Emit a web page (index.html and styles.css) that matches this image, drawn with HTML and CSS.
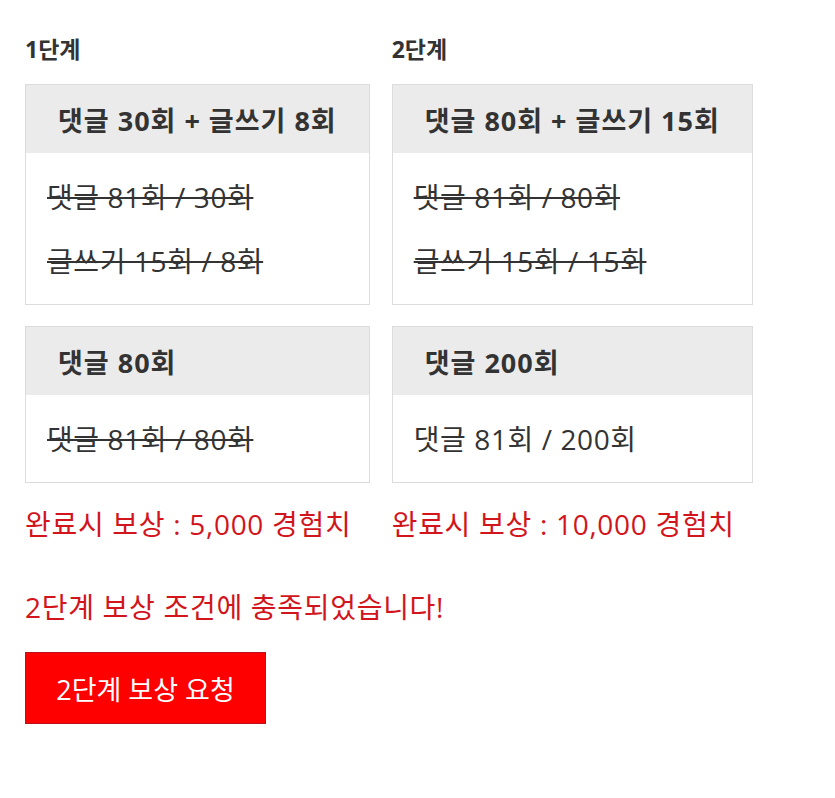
FILE: index.html
```html
<!DOCTYPE html>
<html lang="ko">
<head>
<meta charset="utf-8">
<title>단계별 보상</title>
<link rel="stylesheet" href="styles.css">
</head>
<body>
<div class="page">
  <div class="stages">
    <section class="stage">
      <h3 class="stage-title">1단계</h3>
      <div class="card">
        <div class="card-head card-head--center">댓글 30회 + 글쓰기 8회</div>
        <div class="card-body">
          <p class="line done">댓글 81회 / 30회</p>
          <p class="line done">글쓰기 15회 / 8회</p>
        </div>
      </div>
      <div class="card">
        <div class="card-head">댓글 80회</div>
        <div class="card-body">
          <p class="line done">댓글 81회 / 80회</p>
        </div>
      </div>
      <p class="reward">완료시 보상 : 5,000 경험치</p>
    </section>
    <section class="stage">
      <h3 class="stage-title">2단계</h3>
      <div class="card">
        <div class="card-head card-head--center">댓글 80회 + 글쓰기 15회</div>
        <div class="card-body">
          <p class="line done">댓글 81회 / 80회</p>
          <p class="line done">글쓰기 15회 / 15회</p>
        </div>
      </div>
      <div class="card">
        <div class="card-head">댓글 200회</div>
        <div class="card-body">
          <p class="line">댓글 81회 / 200회</p>
        </div>
      </div>
      <p class="reward">완료시 보상 : 10,000 경험치</p>
    </section>
  </div>
  <p class="notice">2단계 보상 조건에 충족되었습니다!</p>
  <button class="claim-btn" type="button">2단계 보상 요청</button>
</div>
</body>
</html>
```

FILE: styles.css
```css
html, body {
  margin: 0;
  padding: 0;
  background: #fff;
}

body {
  font-family: "Open Sans", "Noto Sans CJK KR", sans-serif;
  color: #333;
}

.page {
  padding: 32px 25px 40px;
}

.stages {
  display: flex;
  align-items: flex-start;
  gap: 22px;
}

.stage {
  display: flex;
  flex-direction: column;
  white-space: nowrap;
}

.stage-title {
  margin: 0 0 18px;
  font-size: 23px;
  font-weight: 700;
  line-height: 34px;
  color: #333;
}

.card {
  border: 1px solid #dcdcdc;
  margin-bottom: 21px;
  background: #fff;
}

.card + .card {
  margin-bottom: 0;
}

.card-head {
  background: #ebebeb;
  height: 68px;
  display: flex;
  align-items: center;
  padding: 0 32px;
  font-size: 27px;
  font-weight: 700;
  letter-spacing: 1px;
}

.card-head--center {
  justify-content: center;
}

.card-body {
  padding: 11px 21px 12px;
}

.line {
  margin: 0;
  height: 64px;
  display: flex;
  align-items: center;
  font-size: 28px;
  font-weight: 400;
  letter-spacing: 0.6px;
}

.line.done {
  text-decoration: line-through;
  text-decoration-thickness: 2px;
}

.reward {
  margin: 21px 0 0;
  font-size: 28px;
  line-height: 40px;
  letter-spacing: 0.7px;
  color: #d2141c;
}

.notice {
  margin: 43px 0 0;
  font-size: 28px;
  line-height: 40px;
  letter-spacing: 0.7px;
  color: #d2141c;
}

.claim-btn {
  margin-top: 25px;
  width: 241px;
  height: 72px;
  background: #ff0000;
  border: 1px solid #b8121a;
  color: #fff;
  font-family: inherit;
  font-size: 27px;
  padding: 0;
  cursor: pointer;
}
```
